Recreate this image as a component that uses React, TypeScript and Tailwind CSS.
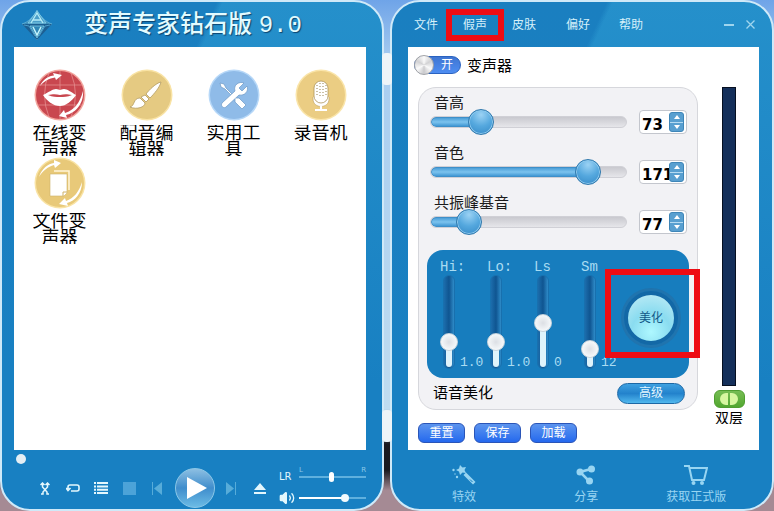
import { useState } from "react";
import type { ReactNode } from "react";
import { Volume2 } from "lucide-react";

const LogoIcon = () => (
  <svg viewBox="0 0 34 32" className="h-8 w-[34px]" fill="none">
    <path d="M17 1 C20 8 26 13 32 15 C26 19 20 25 17 31 C14 25 8 19 2 15 C8 13 14 8 17 1 Z" fill="#3b8dbb" stroke="#63b4d8" strokeWidth="0.8" />
    <path d="M2 15 H32 L17 31 Z" fill="#1c5f92" />
    <path d="M17 2 L8 14 H26 Z" fill="#4b9fca" stroke="#8ad3ea" strokeWidth="0.8" />
    <path d="M11 14 L17 4 L23 14 M13 11 H21" stroke="#b5ecf7" strokeWidth="1.3" />
    <path d="M10 17 H24 L17 29 Z" fill="#2f86b6" stroke="#7fcbe6" strokeWidth="0.8" />
    <path d="M13 18 L17 26 L21 18" stroke="#c5f4fb" strokeWidth="1.5" />
    <path d="M4 16 L9 17 L15 27 M30 16 L25 17 L19 27" stroke="#4a9cc8" strokeWidth="1" />
  </svg>
);

const LipsIcon = () => (
  <svg viewBox="0 0 52 52" className="h-full w-full" fill="none">
    <circle cx="26" cy="26" r="25.5" fill="#f3a79f" />
    <circle cx="26" cy="26" r="24" fill="#c9474f" />
    <path d="M4 16 H48 M4 36 H48 M26 2 V50 M15 4 Q6 26 15 48 M37 4 Q46 26 37 48" stroke="#e58d8e" strokeWidth="0.8" />
    <path d="M6 17 C9 10 15 7 20 6.500 L19 4 L28 6 L22 11 L21 8.500 C15 9.500 10 12 6 17 Z" fill="#fff" />
    <path d="M49 22 C50 34 42 44 32 46 L33 49 L25 47 L30 41 L31 44 C40 41 46 34 49 22 Z" fill="#fff" />
    <path d="M9 26 C15 23 19 20 22 20 C24 20 25 21 26 21 C27 21 28 20 30 20 C33 20 37 23 42 26 C38 32 32 37 26 37 C19 37 13 32 9 26 Z" fill="#fff" />
    <path d="M14 26 C19 25 22 25 26 26 C30 25 33 25 38 26 C33 28 30 28 26 28 C22 28 19 28 14 26 Z" fill="#c9474f" />
  </svg>
);

const BrushIcon = () => (
  <svg viewBox="0 0 52 52" className="h-full w-full">
    <circle cx="26" cy="26" r="25.5" fill="#f9e3a4" />
    <circle cx="26" cy="26" r="24" fill="#e5ca82" />
    <g fill="#fff" stroke="#b39c63" strokeWidth="0.8">
      <path d="M40 13 C35 14 28 21 25 25 L29 29 C33 25 39 18 40 13 Z" />
      <path d="M24 26 L28 30 L25 33 L20 28 Z" />
      <path d="M19 29 L24 34 C24 38 16 41 9 38 C14 37 12 29 19 29 Z" />
    </g>
  </svg>
);

const ToolsIcon = () => (
  <svg viewBox="0 0 52 52" className="h-full w-full">
    <circle cx="26" cy="26" r="25.5" fill="#b7d8f8" />
    <circle cx="26" cy="26" r="24" fill="#8fbbe8" />
    <g fill="#fff" stroke="#6c98c6" strokeWidth="0.7">
      <path d="M12 14 L16 15 L18 19 L28 29 L31 29 L38 36 L34 40 L27 33 L27 30 L17 20 L13 18 Z" />
      <path d="M36 14 L31 19 L34 22 L39 17 C41 22 37 27 31 26 L18 38 C16 40 12 37 14 34 L27 22 C25 16 31 12 36 14 Z" />
    </g>
  </svg>
);

const MicIcon = () => (
  <svg viewBox="0 0 52 52" className="h-full w-full">
    <circle cx="26" cy="26" r="25.5" fill="#fae5aa" />
    <circle cx="26" cy="26" r="24" fill="#ebcd83" />
    <path d="M18 28 V30 C18 40 34 40 34 30 V28" fill="#fff" stroke="#b89c5a" strokeWidth="0.6" />
    <rect x="19" y="12" width="14" height="22" rx="7" fill="#fff" stroke="#ad945a" strokeWidth="0.8" />
    <path d="M22 16 V28 M25 14 V28 M28 14 V28 M31 16 V28" stroke="#95814f" strokeDasharray="1 2" />
    <path d="M26 37 V41 M20 41 H32" fill="none" stroke="#fff" strokeWidth="2" />
  </svg>
);

const FileIcon = () => (
  <svg viewBox="0 0 52 52" className="h-full w-full">
    <circle cx="26" cy="26" r="25.5" fill="#f9e3a4" />
    <circle cx="26" cy="26" r="24" fill="#e8c979" />
    <path d="M5 20 C8 11 14 7 20 6 L20 3 L27 6 L21 11 L20 8 C14 10 9 13 5 20 Z" fill="#fff" />
    <path d="M48 25 C48 36 41 44 33 46 L34 49 L25 47 L31 41 L32 44 C40 41 45 35 48 25 Z" fill="#fff" />
    <path d="M20 14 H35 V33" fill="none" stroke="#fff5d8" strokeWidth="1.5" />
    <path d="M16 17 H33 V36 L30 39 H16 Z" fill="#fff" stroke="#cfb269" strokeWidth="0.6" />
    <path d="M33 35 H29 V39" fill="none" stroke="#cfb269" />
  </svg>
);

const tools = [
  { label: "在线变声器", icon: LipsIcon },
  { label: "配音编辑器", icon: BrushIcon },
  { label: "实用工具", icon: ToolsIcon },
  { label: "录音机", icon: MicIcon },
  { label: "文件变声器", icon: FileIcon },
];

const voiceSliders = [
  { id: "pitch", label: "音高", position: 22, value: "73" },
  { id: "timbre", label: "音色", position: 85, value: "171" },
  { id: "formant", label: "共振峰基音", position: 15, value: "77" },
];

const equalizer = [
  { label: "Hi:", position: 24, value: "1.0" },
  { label: "Lo:", position: 24, value: "1.0" },
  { label: "Ls", position: 49, value: "0" },
  { label: "Sm", position: 15, value: "12" },
];

const Window = ({ children }: { children: ReactNode }) => (
  <section className="flex min-w-0 flex-1 flex-col rounded-[30px] border-2 border-[#cfe9f8] bg-[linear-gradient(180deg,transparent_0%,#1880c2_75%),linear-gradient(115deg,#1a7fc0_35%,#2590cb_36%)] bg-origin-border">
    {children}
  </section>
);

const VoiceSlider = ({ id, label, position, value }: (typeof voiceSliders)[number]) => {
  const [level, setLevel] = useState(position);
  const [text, setText] = useState(value);

  return (
    <div>
      <label htmlFor={id} className="block text-[15px] leading-4 text-[#1c1c1c]">
        {label}
      </label>
      <div className="-mt-0.5 flex h-[26px] items-center gap-3">
        <div className="relative -ml-1 flex h-full flex-1 items-center">
          <div className="h-3 w-full overflow-hidden rounded-full border border-[#d0d0d6] bg-gradient-to-b from-[#c9c9cf] to-[#e6e6ea]">
            <div
              className="h-full rounded-l-full border border-[#3e8fc9] bg-gradient-to-b from-[#4b9fd8] via-[#7cc3ee] to-[#4098d4]"
              style={{ width: `${level}%` }}
            ></div>
          </div>
          <input
            id={id}
            type="range"
            value={level}
            onChange={(e) => setLevel(Number(e.target.value))}
            className="absolute inset-0 h-full w-full appearance-none bg-transparent [&::-webkit-slider-thumb]:h-[26px] [&::-webkit-slider-thumb]:w-[26px] [&::-webkit-slider-thumb]:appearance-none [&::-webkit-slider-thumb]:rounded-full [&::-webkit-slider-thumb]:border [&::-webkit-slider-thumb]:border-[#2e78ad] [&::-webkit-slider-thumb]:bg-[radial-gradient(circle_at_50%_20%,#9bd2f4,#55a8de_50%,#3488c6)] [&::-webkit-slider-thumb]:shadow-[inset_0_0_0_1px_#8fcaee]"
          />
        </div>
        <div className="flex h-6 w-12 items-center rounded border border-[#c3c6cd] bg-white pr-0.5">
          <input
            aria-label={`${label}数值`}
            value={text}
            onChange={(e) => setText(e.target.value)}
            className="h-full w-[29px] bg-transparent pt-1.5 pl-0.5 font-['DejaVu_Sans',sans-serif] text-[15px] font-bold text-black outline-none"
          />
          <div className="flex h-5 flex-1 flex-col divide-y divide-[#b5daf1] overflow-hidden rounded-[3px] border border-[#3f86b8] bg-[#589fd0]">
            <button aria-label="增加" className="flex flex-1 items-center justify-center">
              <svg viewBox="0 0 6 4" className="h-1 w-1.5">
                <path d="M0 4 L3 0 L6 4 Z" fill="#fff" />
              </svg>
            </button>
            <button aria-label="减少" className="flex flex-1 items-center justify-center">
              <svg viewBox="0 0 6 4" className="h-1 w-1.5">
                <path d="M0 0 L3 4 L6 0 Z" fill="#fff" />
              </svg>
            </button>
          </div>
        </div>
      </div>
    </div>
  );
};

const EqualizerSlider = ({ label, position, value }: (typeof equalizer)[number]) => {
  const [level, setLevel] = useState(position);

  return (
    <label className="flex w-9 flex-col font-['Liberation_Mono',monospace] text-[13px] text-[#a9dcf2]">
      <span className="h-[13px] overflow-hidden text-sm leading-[18px] whitespace-nowrap">{label}</span>
      <span className="mt-1 flex items-end gap-0.5">
        <span className="relative flex h-[94px] w-[18px] shrink-0 justify-center">
          <span className="flex w-3 flex-col justify-end rounded-full border border-[#1870ae] bg-gradient-to-r from-[#1c6dac] via-[#0f5591] to-[#2e8bc8] px-0.5 pb-px">
            <span className="rounded-b-full bg-[#dff3fb]" style={{ height: `${level + 5}%` }}></span>
          </span>
          <input
            type="range"
            value={level}
            onChange={(e) => setLevel(Number(e.target.value))}
            className="absolute inset-0 h-full w-full appearance-none bg-transparent [direction:rtl] [writing-mode:vertical-lr] [&::-webkit-slider-thumb]:h-[18px] [&::-webkit-slider-thumb]:w-[18px] [&::-webkit-slider-thumb]:appearance-none [&::-webkit-slider-thumb]:rounded-full [&::-webkit-slider-thumb]:border [&::-webkit-slider-thumb]:border-[#c8d4dc] [&::-webkit-slider-thumb]:bg-[radial-gradient(circle,#dcdfe4,#f5f8fa_70%)]"
          />
        </span>
        <span className="leading-3">{value}</span>
      </span>
    </label>
  );
};

const PlayerWindow = () => (
  <Window>
    <header className="flex h-[45px] items-center gap-[30px] pl-[18px]">
      <LogoIcon />
      <h1 className="text-2xl font-medium whitespace-nowrap text-[#e2fbff] [text-shadow:1px_1px_1px_#0b4470]">
        变声专家钻石版 <span className="font-['Liberation_Mono',monospace]">9.0</span>
      </h1>
    </header>

    <main className="mr-4 ml-3 flex-1 bg-white px-0.5 pt-[22px]">
      <div className="grid grid-cols-4">
        {tools.map((tool) => (
          <button key={tool.label} className="flex h-[88px] flex-col items-center">
            <span className="h-[52px] w-[52px]">
              <tool.icon />
            </span>
            <span className="mt-1 h-[31px] w-[54px] overflow-hidden text-lg leading-[17px] text-black">
              {tool.label}
            </span>
          </button>
        ))}
      </div>
    </main>

    <footer className="h-[59px]">
      <div className="flex h-[18px] items-center pr-4 pl-3.5">
        <input
          type="range"
          aria-label="播放进度"
          defaultValue={0}
          className="h-2.5 w-full appearance-none bg-transparent [&::-webkit-slider-thumb]:h-2.5 [&::-webkit-slider-thumb]:w-2.5 [&::-webkit-slider-thumb]:appearance-none [&::-webkit-slider-thumb]:rounded-full [&::-webkit-slider-thumb]:bg-[#e4eef4]"
        />
      </div>
      <div className="flex h-10 items-center pr-4 pl-[29px] text-[#e3f7fd]">
        <button aria-label="随机播放" className="flex w-7 justify-center">
          <svg viewBox="0 0 10 13" className="h-[13px] w-2.5" fill="none" stroke="currentColor" strokeWidth="1.5">
            <path d="M1 12 H3 V10 L7.500 5 V1.500 M9 12 H7 V10 L2.500 5 V1.500 M0.500 3 L2.500 1 L4.500 3 M5.500 3 L7.500 1 L9.500 3" />
          </svg>
        </button>
        <button aria-label="循环" className="flex w-7 justify-center">
          <svg viewBox="0 0 14 9" className="h-[9px] w-3.5" fill="none" stroke="currentColor" strokeWidth="1.6">
            <path d="M5 7 H11 Q13 7 13 5 V3 Q13 1 11 1 H4 Q2 1 2 3 V5 M0 4 L2 6.500 L4.500 4" />
          </svg>
        </button>
        <button aria-label="播放列表" className="flex w-7 justify-center">
          <svg viewBox="0 0 14 12" className="h-3 w-3.5" fill="currentColor">
            <path d="M0 0h2v2H0zM3 0h11v2H3zM0 3.400h2v2H0zM3 3.400h11v2H3zM0 6.700h2v2H0zM3 6.700h11v2H3zM0 10h2v2H0zM3 10h11v2H3z" />
          </svg>
        </button>
        <button aria-label="停止" className="flex w-7 justify-center">
          <span className="h-[13px] w-[13px] bg-[#4ca3d8]"></span>
        </button>
        <button aria-label="上一首" className="flex w-7 justify-center">
          <svg viewBox="0 0 10 13" className="h-[13px] w-2.5" fill="#57acd9">
            <path d="M0 0h1v13H0zM10 0v13L2 6.500z" />
          </svg>
        </button>
        <button aria-label="播放" className="flex w-12 justify-center">
          <span className="flex h-10 w-10 items-center justify-center rounded-full border border-[#8cc8e8] bg-[linear-gradient(180deg,#8dbfe2,#3f8dcc_50%,#6bbbe5)]">
            <svg viewBox="0 0 20 22" className="ml-1 h-[22px] w-5" fill="#fff">
              <path d="M0 0 L20 11 L0 22 Z" />
            </svg>
          </span>
        </button>
        <button aria-label="下一首" className="flex w-6 justify-center">
          <svg viewBox="0 0 10 13" className="h-[13px] w-2.5" fill="#57acd9">
            <path d="M9 0h1v13H9zM0 0v13l8-6.500z" />
          </svg>
        </button>
        <button aria-label="弹出" className="flex w-[34px] justify-center">
          <svg viewBox="0 0 12 11" className="h-[11px] w-3" fill="currentColor">
            <path d="M6 0 L12 7 H0 Z M0 9h12v2H0z" />
          </svg>
        </button>
        <div className="ml-0.5 flex min-w-0 flex-1 flex-col gap-[3px] pb-1">
          <label className="flex h-5 items-center gap-1 font-['DejaVu_Sans',sans-serif] text-[10px]">
            <span className="w-4">LR</span>
            <span className="relative flex h-5 min-w-0 flex-1 items-center">
              <span className="absolute inset-x-0 top-0 flex justify-between text-[7px] leading-[7px] text-[#8cc8e8]">
                <span>L</span>
                <span>R</span>
              </span>
              <input
                type="range"
                defaultValue={48}
                className="h-2.5 w-full appearance-none bg-[linear-gradient(#5fb0de,#5fb0de)] bg-[length:100%_2px] bg-center bg-no-repeat [&::-webkit-slider-thumb]:h-2.5 [&::-webkit-slider-thumb]:w-[5px] [&::-webkit-slider-thumb]:appearance-none [&::-webkit-slider-thumb]:rounded-sm [&::-webkit-slider-thumb]:bg-white"
              />
            </span>
          </label>
          <div className="flex items-center gap-1">
            <Volume2 className="h-4 w-4 [&>path:first-child]:fill-current" strokeWidth={2} />
            <input
              type="range"
              aria-label="音量"
              defaultValue={72}
              className="h-2 min-w-0 flex-1 appearance-none bg-[linear-gradient(to_right,#fff_72%,#5fb0de_72%)] bg-[length:100%_2px] bg-center bg-no-repeat [&::-webkit-slider-thumb]:h-2 [&::-webkit-slider-thumb]:w-2 [&::-webkit-slider-thumb]:appearance-none [&::-webkit-slider-thumb]:rounded-full [&::-webkit-slider-thumb]:bg-[#f2fafd]"
            />
          </div>
        </div>
      </div>
    </footer>
  </Window>
);

const ChangerWindow = () => (
  <Window>
    <header className="flex h-[45px] items-center justify-between pr-[17px] pl-[22px] text-xs text-[#d5f0fa]">
      <nav className="flex gap-[30px]">
        <div className="flex gap-[25px]">
          <button>文件</button>
          <button className="relative">
            假声
            <span className="absolute -inset-x-[17px] -inset-y-2 border-[6px] border-[#ee0c14]"></span>
          </button>
          <button>皮肤</button>
        </div>
        <div className="flex gap-[29px]">
          <button>偏好</button>
          <button>帮助</button>
        </div>
      </nav>
      <div className="flex items-center gap-3 text-[#9fd5ee]">
        <button aria-label="最小化" className="flex h-4 w-2.5 items-center">
          <span className="h-0.5 w-full bg-current"></span>
        </button>
        <button aria-label="关闭">
          <svg viewBox="0 0 9 9" className="h-[9px] w-[9px]" stroke="currentColor" strokeWidth="1.3">
            <path d="M0.500 0.500 L8.500 8.500 M8.500 0.500 L0.500 8.500" />
          </svg>
        </button>
      </div>
    </header>

    <main className="mr-[13px] ml-4 flex flex-1 flex-col bg-white pt-2 pr-3.5 pb-[7px] pl-2.5">
      <label className="-ml-1 flex h-5 items-center gap-1.5 text-[15px] text-black">
        <input type="checkbox" defaultChecked className="sr-only" />
        <span className="flex h-[18px] w-[47px] items-center rounded-full border border-[#2a62c0] bg-gradient-to-b from-[#3f76d2] to-[#4e8df2] text-xs text-white">
          <span className="-ml-px h-5 w-5 shrink-0 rounded-full border border-[#a2a4a8] bg-[conic-gradient(#fafafa,#d2d2d4,#fafafa,#cacacd,#fafafa,#d2d2d4,#fafafa)]"></span>
          <span className="flex-1 text-center leading-4">开</span>
        </span>
        <span className="pt-0.5">变声器</span>
      </label>

      <div className="mt-3 flex flex-1 gap-[15px]">
        <div className="min-w-0 flex-1 rounded-[18px] border border-[#d6d7dc] bg-[#f2f2f5] px-2 pt-[7px]">
          <div className="flex flex-col gap-2.5 pr-0.5 pl-[7px]">
            {voiceSliders.map((slider) => (
              <VoiceSlider key={slider.id} {...slider} />
            ))}
          </div>

          <div className="relative mt-[15px] flex h-32 rounded-2xl bg-[#177dbe] pt-2 pr-1 pl-[13px]">
            <div className="flex gap-[11px]">
              {equalizer.map((band) => (
                <EqualizerSlider key={band.label} {...band} />
              ))}
            </div>
            <div className="flex flex-1 items-center justify-center">
              <button className="h-[54px] w-[54px] shrink-0 rounded-full border-4 border-[#1368a6] bg-[radial-gradient(circle_at_50%_80%,#aef8ff,#8adcf0_45%,#c4edf6)] text-xs text-[#125888] shadow-[0_0_0_3px_#2074ae]">
                美化
              </button>
            </div>
            <span className="pointer-events-none absolute top-[19px] -right-[11px] h-[89px] w-[95px] border-[6px] border-[#ee0c14]"></span>
          </div>

          <div className="flex h-[30px] items-center justify-between pr-1 pl-1.5 text-[15px] text-black">
            语音美化
            <button className="h-[21px] w-[68px] rounded-full border border-[#1d68a5] bg-[linear-gradient(180deg,#3ea1e1,#2382cc_50%,#51b8ee)] text-xs text-[#e3f7ff]">
              高级
            </button>
          </div>
        </div>

        <div className="flex w-8 flex-col items-center">
          <div className="w-3.5 flex-1 border border-[#060f20] bg-[#142f5a]"></div>
          <button
            aria-label="双层"
            className="mt-1 flex h-[18px] w-[31px] items-center justify-center rounded-md border border-[#4f9e30] bg-gradient-to-b from-[#76bd53] to-[#52a72f]"
          >
            <svg viewBox="0 0 18 12" className="h-3 w-[18px]" fill="#d7f7a0">
              <path d="M8 0 V12 H6 A6 6 0 0 1 6 0 Z M10 0 V12 H12 A6 6 0 0 0 12 0 Z" />
            </svg>
          </button>
          <span className="mt-1 -mb-3.5 h-3 overflow-hidden text-sm leading-3 text-black">双层</span>
        </div>
      </div>

      <div className="mt-[13px] flex gap-[9px]">
        {["重置", "保存", "加载"].map((action) => (
          <button
            key={action}
            className="h-5 w-[47px] rounded-md border border-[#2a55b8] bg-gradient-to-b from-[#5c94ee] to-[#2468ee] text-xs leading-4 text-white"
          >
            {action}
          </button>
        ))}
      </div>
    </main>

    <footer className="grid h-[59px] grid-cols-[5fr_5fr_4fr] pr-[27px] pl-[11px] text-xs text-[#98d5f2]">
      <button className="flex flex-col items-center justify-end gap-1 pb-1">
        <svg viewBox="0 0 24 20" className="h-5 w-6" fill="currentColor">
          <path d="M8 0 L10.500 2.500 L14 2 L12.500 5 L14 8 L10.500 7.500 L8 10 L7 6.500 L4 5 L7 3.500 Z" />
          <path d="M11.500 10 L14 7.500 L23.500 17 L21 19.500 Z" />
          <path d="M18 14.500 L20.500 17" stroke="#1880c2" strokeWidth="1" />
          <circle cx="1.500" cy="5" r="1.2" />
          <circle cx="5" cy="12" r="1.2" />
          <circle cx="3" cy="9" r="0.7" />
        </svg>
        <span className="leading-4">特效</span>
      </button>
      <button className="flex flex-col items-center justify-end gap-1 pb-1">
        <svg viewBox="0 0 20 20" className="h-5 w-5" fill="currentColor">
          <path d="M15 4 L4 7 L13 16" fill="none" stroke="currentColor" strokeWidth="2.5" />
          <circle cx="15.500" cy="4" r="3.500" />
          <circle cx="4" cy="7" r="3.500" />
          <circle cx="13.500" cy="16" r="3.500" />
        </svg>
        <span className="leading-4">分享</span>
      </button>
      <button className="flex flex-col items-center justify-end gap-1 pb-1">
        <svg viewBox="0 0 24 20" className="h-5 w-6" fill="none" stroke="currentColor" strokeWidth="2">
          <path d="M0 1 H5 L8 15 H20 L23 3 H6" />
          <circle cx="9.500" cy="18" r="2" fill="currentColor" stroke="none" />
          <circle cx="18" cy="18" r="2" fill="currentColor" stroke="none" />
        </svg>
        <span className="leading-4">获取正式版</span>
      </button>
    </footer>
  </Window>
);

const App = () => {
  return (
    <div className="relative flex min-h-screen gap-1.5 bg-[linear-gradient(180deg,#6fa4e8_0%,#a8cdf0_12%,#bfdcf0_80%,#1a1a20_87%,#1a1a20_92%,#a58a94_96%)] font-['Liberation_Sans','Noto_Sans_CJK_SC',sans-serif]">
      <PlayerWindow />
      {/* hinges joining the two windows */}
      <span className="absolute top-[53px] left-1/2 h-8 w-2.5 -translate-x-1/2 rounded-sm bg-[#edf4f8]"></span>
      <span className="absolute bottom-[69px] left-1/2 h-8 w-2.5 -translate-x-1/2 rounded-sm bg-[#edf4f8]"></span>
      <ChangerWindow />
    </div>
  );
};

export default App;
